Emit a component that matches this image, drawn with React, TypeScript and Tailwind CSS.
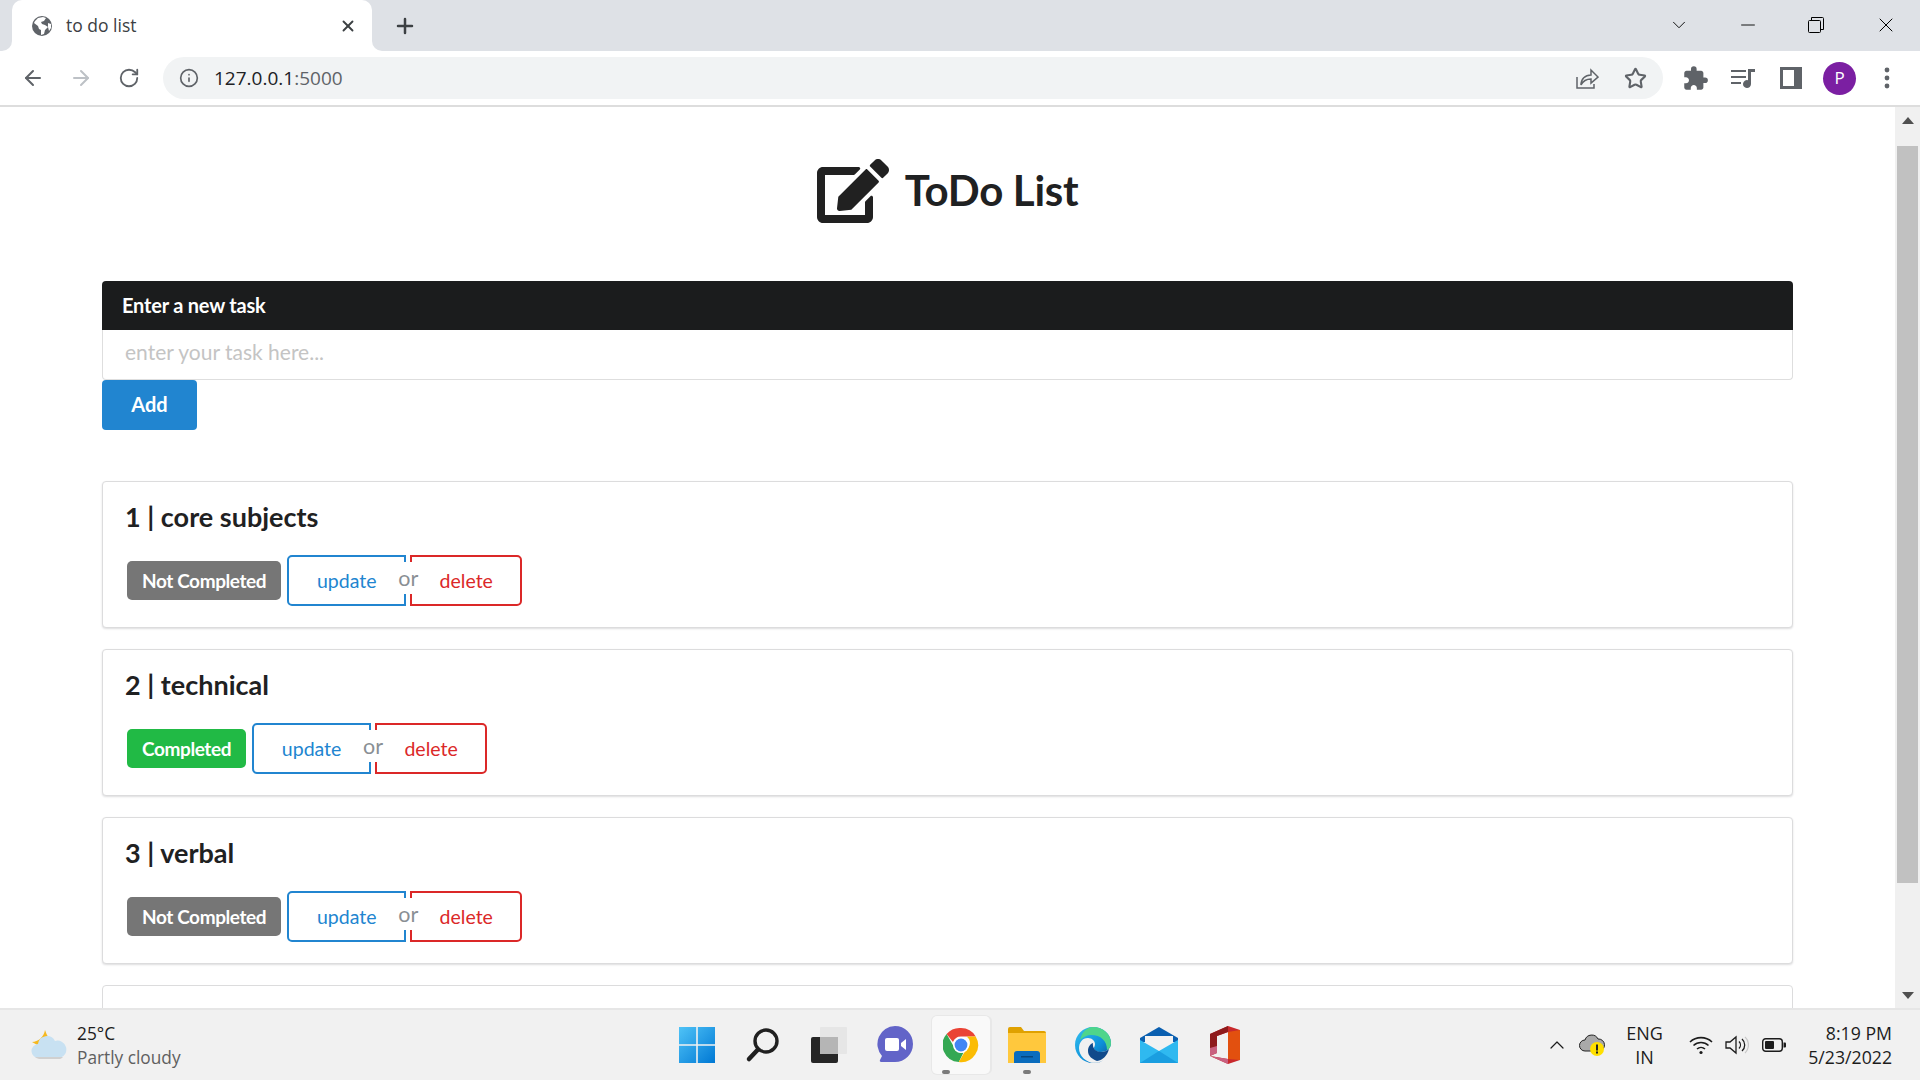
import { ArrowLeft, ArrowRight, ChevronDown, ChevronUp, Info, Minus, Plus, RotateCw, Star, X } from 'lucide-react'
import { FaEdit } from 'react-icons/fa'
import { MdExtension } from 'react-icons/md'

const TASKS = [
  { id: 1, name: 'core subjects', done: false },
  { id: 2, name: 'technical', done: true },
  { id: 3, name: 'verbal', done: false },
]

function Globe() {
  return (
    <svg width="22" height="22" viewBox="0 0 22 22">
      <circle cx="11" cy="11" r="10" fill="#5f6368" />
      <path d="M3 8l4 3 1 3 2 1v5l3-1 1-4 3-3-3-2-3-1-1-2 3-1 2-3-3-1-5 1-3 3z" fill="#fff" />
      <path d="M17 8l3 1 0 4-2 3-1-4z" fill="#fff" />
    </svg>
  )
}

function TabStrip() {
  return (
    <div className="flex h-[51px] items-end bg-[#dee1e6]">
      <div className="relative ml-[12px] flex h-[51px] w-[360px] items-center rounded-t-[10px] bg-white pl-[19px] pr-[15px]">
        <span className="absolute bottom-0 left-[-10px] h-[10px] w-[10px] bg-white">
          <span className="block h-full w-full rounded-br-[10px] bg-[#dee1e6]" />
        </span>
        <span className="absolute bottom-0 right-[-10px] h-[10px] w-[10px] bg-white">
          <span className="block h-full w-full rounded-bl-[10px] bg-[#dee1e6]" />
        </span>
        <Globe />
        <span className="ml-[13px] flex-1 text-[17.5px] text-[#3c4043]">to do list</span>
        <X size={18} strokeWidth={2.5} className="text-[#3c4043]" />
      </div>
      <Plus size={24} strokeWidth={2.5} className="mb-[13px] ml-[21px] text-[#3c4043]" />
      <div className="mb-[14px] ml-auto flex items-center text-black">
        <ChevronDown size={22} strokeWidth={1} className="mr-[47px]" />
        <Minus size={22} strokeWidth={1} className="mr-[49px]" />
        <svg width="16" height="16" viewBox="0 0 16 16" fill="none" stroke="#000" className="mr-[50px]">
          <rect x="0.5" y="3.5" width="12" height="12" rx="1" />
          <path d="M3.5 3V.5h11a1 1 0 0 1 1 1V12.5H13" />
        </svg>
        <X size={24} strokeWidth={1} className="mr-[22px]" />
      </div>
    </div>
  )
}

function ToolBar() {
  return (
    <div className="flex h-[56px] items-center border-b-2 border-[#dddddd] bg-white">
      <ArrowLeft size={24} strokeWidth={2} className="ml-[21px] text-[#5f6368]" />
      <ArrowRight size={24} strokeWidth={2} className="ml-[24px] text-[#bdc1c6]" />
      <RotateCw size={22} strokeWidth={2} className="ml-[25px] text-[#5f6368]" />
      <div className="ml-[23px] flex h-[42px] w-[1500px] items-center rounded-full bg-[#f1f3f4] pl-[16px] pr-[16px]">
        <Info size={20} strokeWidth={2} className="text-[#5f6368]" />
        <span className="ml-[15px] flex-1 text-[19px] text-[#202124]">
          127.0.0.1<span className="text-[#5f6368]">:5000</span>
        </span>
        <svg width="24" height="24" viewBox="0 0 24 24" fill="none" stroke="#5f6368" strokeWidth="1.5">
          <path d="M2 11v11h17v-4" />
          <path d="M6 19c0-6 4-10 10-10V4l7 7-7 6v-4c-5 0-8 2-10 6z" />
        </svg>
        <Star size={23} strokeWidth={2.2} className="ml-[25px] text-[#5f6368]" />
      </div>
      <MdExtension size={27} className="ml-[19px] text-[#5f6368]" />
      <svg width="24" height="22" viewBox="0 0 24 22" fill="#5f6368" className="ml-[22px]">
        <path d="M0 3h15v2H0zM0 9h15v2H0zM0 15h10v2H0z" />
        <path d="M17 2h7v3h-4v12a4 4 0 1 1-3-3.8z" />
      </svg>
      <svg width="22" height="22" viewBox="0 0 22 22" className="ml-[25px]">
        <path d="M0 0h22v22H0z" fill="#5f6368" />
        <path d="M3 3h11v16H3z" fill="#fff" />
      </svg>
      <div className="ml-[21px] flex h-[33px] w-[33px] items-center justify-center rounded-full bg-[#7b1fa2] text-[17px] text-white">
        P
      </div>
      <svg width="6" height="22" viewBox="0 0 6 22" fill="#5f6368" className="ml-[28px]">
        <circle cx="3" cy="3" r="2.4" />
        <circle cx="3" cy="11" r="2.4" />
        <circle cx="3" cy="19" r="2.4" />
      </svg>
    </div>
  )
}

function TaskCard({ id, name, done }: { id: number; name: string; done: boolean }) {
  return (
    <div className="h-[147px] rounded-[4px] border border-[#dcdcdd] bg-white pl-[24px] pt-[17px] shadow-[0_1px_2px_rgba(34,36,38,0.15)]">
      <div className="ml-[-2px] text-[27px] font-bold leading-[36px] text-[#1f2122]">
        {id} | {name}
      </div>
      <div className="mt-[20px] flex items-center">
        {done ? (
          <span className="flex h-[39px] items-center rounded-[5px] bg-[#21ba45] px-[15px] pt-[1px] text-[19px] font-bold tracking-[-0.4px] text-white">
            Completed
          </span>
        ) : (
          <span className="flex h-[39px] items-center rounded-[5px] bg-[#767676] px-[15px] pt-[1px] text-[19px] font-bold tracking-[-0.4px] text-white">
            Not Completed
          </span>
        )}
        <div className="relative ml-[6px] flex">
          <span className="flex h-[51px] w-[119px] items-center justify-center rounded-l-[5px] border-2 border-[#2185d0] bg-white text-[19.5px] text-[#2185d0]">
            update
          </span>
          <span className="ml-[4px] flex h-[51px] w-[112px] items-center justify-center rounded-r-[5px] border-2 border-[#db2828] bg-white text-[19.5px] text-[#db2828]">
            delete
          </span>
          <span className="absolute left-[110px] top-[7px] flex h-[32px] w-[22px] items-center justify-center bg-white text-[21.5px] text-[#8a8f94]">
            or
          </span>
        </div>
      </div>
    </div>
  )
}

function Page() {
  return (
    <div className="flex min-h-0 flex-1">
      <div className="min-w-0 flex-1 overflow-hidden bg-white px-[102px] font-['Lato',sans-serif]">
        <div className="flex h-[174px] items-start justify-center pt-[48px]">
          <FaEdit size={72} className="mr-[16px] text-[#212121]" />
          <span className="mt-[8px] text-[42px] font-bold leading-[54px] tracking-[-0.3px] text-[#1f2122]">
            ToDo List
          </span>
        </div>
        <div className="flex h-[49px] items-center rounded-t-[4px] bg-[#1b1c1d] pb-[2px] pl-[20px] text-[20px] font-bold tracking-[-0.2px] text-white">
          Enter a new task
        </div>
        <div className="flex h-[50px] items-center rounded-b-[4px] border border-t-0 border-[#dedede] bg-white pb-[5px] pl-[22px] text-[21px] text-[#c4c4c4]">
          enter your task here...
        </div>
        <button className="flex h-[50px] w-[95px] items-center justify-center rounded-[4px] bg-[#2185d0] pb-[2px] text-[20px] font-bold text-white">
          Add
        </button>
        <div className="mt-[51px] flex flex-col gap-[21px]">
          {TASKS.map((t) => (
            <TaskCard key={t.id} {...t} />
          ))}
          <div className="h-[147px] rounded-[4px] border border-[#dcdcdd] bg-white" />
        </div>
      </div>
      <div className="flex w-[25px] shrink-0 flex-col items-center justify-between bg-[#f0f0f0]">
        <div className="flex w-full flex-col items-center">
          <svg width="12" height="7" viewBox="0 0 12 7" fill="#505050" className="mt-[10px]">
            <path d="M6 0l6 7H0z" />
          </svg>
          <div className="mt-[22px] h-[737px] w-[21px] bg-[#c1c1c1]" />
        </div>
        <svg width="12" height="7" viewBox="0 0 12 7" fill="#505050" className="mb-[9px]">
          <path d="M6 7L0 0h12z" />
        </svg>
      </div>
    </div>
  )
}

function ChromeLogo() {
  return (
    <svg width="36" height="36" viewBox="0 0 36 36">
      <path d="M18 1a17 17 0 0 1 14.7 8.5H18a8.5 8.5 0 0 0-8 5.6L3.6 7A17 17 0 0 1 18 1z" fill="#ea4335" />
      <path d="M3.6 7l7.4 13a8 8 0 0 0 9.5 5.6L15.8 35A17 17 0 0 1 3.6 7z" fill="#34a853" />
      <path d="M32.7 9.5A17 17 0 0 1 15.8 35l6.9-12a8 8 0 0 0 1-13.5z" fill="#fbbc04" />
      <circle cx="18" cy="18" r="8" fill="#fff" />
      <circle cx="18" cy="18" r="6.4" fill="#4285f4" />
    </svg>
  )
}

function TaskIcons() {
  return (
    <div className="ml-[1px] grid w-[594px] shrink-0 grid-cols-9 items-center justify-items-center">
      <svg width="36" height="36" viewBox="0 0 36 36">
        <defs>
          <linearGradient id="win" x1="0" y1="0" x2="1" y2="1">
            <stop offset="0" stopColor="#4fc3f7" />
            <stop offset="1" stopColor="#0078d4" />
          </linearGradient>
        </defs>
        <path d="M0 0h17.2v17.2H0zM18.8 0H36v17.2H18.8zM0 18.800h17.2V36H0zM18.800 18.800H36V36H18.800z" fill="url(#win)" />
      </svg>
      <svg width="36" height="36" viewBox="0 0 36 36" fill="none" stroke="#202020">
        <circle cx="21" cy="14" r="11" strokeWidth="3.4" />
        <path d="M12.500 23L4 32" strokeWidth="4.500" strokeLinecap="round" />
      </svg>
      <svg width="36" height="36" viewBox="0 0 36 36">
        <rect x="0" y="10" width="27" height="26" rx="2" fill="#262626" />
        <rect x="9" y="0" width="27" height="27" rx="1" fill="#e4e4e4" fillOpacity="0.8" />
        <rect x="9" y="10" width="18" height="17" fill="#b5b5b5" />
      </svg>
      <svg width="36" height="38" viewBox="0 0 36 38">
        <path d="M18 0a18 18 0 0 1 0 36H4c-1 0-1.500-1-1-2l2-4A18 18 0 0 1 18 0z" fill="#6264c8" />
        <rect x="8" y="12" width="14" height="13" rx="2" fill="#fff" />
        <path d="M24 17l5-4v11l-5-4z" fill="#fff" />
      </svg>
      <div className="relative flex h-[58px] w-[58px] items-center justify-center rounded-[5px] bg-[#f9f9f9] shadow-[2px_0_0_#e8e8e8,0_0_0_1px_#e8e8e8]">
        <ChromeLogo />
        <span className="absolute bottom-0 left-[10px] h-[4px] w-[8px] rounded-full bg-[#7a7a7a]" />
      </div>
      <div className="relative flex h-[58px] w-[58px] items-center justify-center">
        <svg width="38" height="36" viewBox="0 0 38 36">
          <path d="M0 2a2 2 0 0 1 2-2h11l3 4h20a2 2 0 0 1 2 2v4H0z" fill="#e0a100" />
          <path d="M0 6h38v30H0z" fill="#ffc83d" />
          <path d="M6 36V27a3 3 0 0 1 3-3h20a3 3 0 0 1 3 3v9z" fill="#0a6cbd" />
          <path d="M13 29h12v1.500H13z" fill="#06477f" />
        </svg>
        <span className="absolute bottom-0 left-[25px] h-[4px] w-[8px] rounded-full bg-[#7a7a7a]" />
      </div>
      <svg width="36" height="36" viewBox="0 0 36 36">
        <defs>
          <linearGradient id="edge" x1="0" y1="0" x2="1" y2="1">
            <stop offset="0" stopColor="#35c1f1" />
            <stop offset="0.6" stopColor="#0c8fd8" />
            <stop offset="1" stopColor="#114a8b" />
          </linearGradient>
        </defs>
        <path d="M18 0c10 0 18 7 18 16 0 6-5 9-10 9-4 0-7-2-7-4 0-1 1-2 1-4 0-3-3-6-7-6-6 0-9 5-9 10 0 8 7 15 16 15 3 0 6-1 9-3-3 2-7 3-11 3C8 36 0 28 0 18S8 0 18 0z" fill="url(#edge)" />
        <path d="M18 0c10 0 18 7 18 16 0 4-2 6-4 7 0-9-6-15-16-15-4 0-8 2-11 5C7 5 12 0 18 0z" fill="#4ed58b" />
        <path d="M13 24c0-4 2-7 5-8-1 5 3 9 8 9 3 0 6-1 8-3-2 7-6 11-12 12-5-2-9-5-9-10z" fill="#114a8b" />
      </svg>
      <svg width="38" height="36" viewBox="0 0 38 36">
        <path d="M0 11L19 0l19 11v4H0z" fill="#0a5fb0" />
        <path d="M5 9h28v12L19 28 5 21z" fill="#f2f2f2" />
        <path d="M0 13l19 11 19-11v23H0z" fill="#2fb9f0" />
        <path d="M0 36l19-12 19 12z" fill="#1a9ee0" />
      </svg>
      <svg width="30" height="38" viewBox="0 0 30 38">
        <path d="M0 8L18 0l12 4v30l-12 4L0 30l18 3V6L7 10v17l-7 3z" fill="#c8282c" />
        <path d="M0 8L18 0v6L7 10v10L0 24z" fill="#8e1a1c" />
        <path d="M0 22l7-2v7l-7 3zM0 30l18 3v5z" fill="#c9607f" />
        <path d="M18 6v27l12 1V4z" fill="#e2500f" />
      </svg>
    </div>
  )
}

function Tray() {
  return (
    <div className="flex flex-1 items-center text-[#1c1c1c]">
      <ChevronUp size={24} strokeWidth={1.2} className="ml-[287px]" />
      <svg width="26" height="24" viewBox="0 0 26 24" className="ml-[10px]">
        <path d="M6 18a5.500 5.500 0 0 1 0-11 7 7 0 0 1 13-1 6 6 0 0 1 1 12z" fill="#a9a9a9" stroke="#222" strokeWidth="1" />
        <circle cx="18" cy="16" r="7" fill="#ffe000" />
        <path d="M17 11.500h2v6h-2zM17 18.500h2v2h-2z" fill="#222" />
      </svg>
      <div className="ml-[21px] w-[37px] text-center text-[18px] leading-[24px]">
        ENG
        <br />
        IN
      </div>
      <svg width="24" height="20" viewBox="0 0 24 20" fill="none" stroke="#1c1c1c" strokeWidth="1.6" className="ml-[26px]">
        <path d="M1 7a16 16 0 0 1 22 0M4.500 10.500a11 11 0 0 1 15 0M8 14a6 6 0 0 1 8 0" />
        <circle cx="12" cy="17.500" r="1.600" fill="#1c1c1c" stroke="none" />
      </svg>
      <svg width="24" height="20" viewBox="0 0 24 20" fill="none" stroke="#1c1c1c" strokeWidth="1.3" className="ml-[12px]">
        <path d="M1 7h4l6-5v16l-6-5H1z" />
        <path d="M14 6.500a5 5 0 0 1 0 7M17 4a8 8 0 0 1 0 12" />
        <path d="M20 2a11 11 0 0 1 0 16" stroke="#c8c8c8" />
      </svg>
      <svg width="24" height="14" viewBox="0 0 24 14" fill="none" className="ml-[13px]">
        <rect x="0.700" y="0.700" width="19.600" height="12.600" rx="3" stroke="#1c1c1c" strokeWidth="1.400" />
        <rect x="3" y="3" width="9" height="8" rx="1" fill="#1c1c1c" />
        <path d="M21.500 4.500H23a1 1 0 0 1 1 1v3a1 1 0 0 1-1 1h-1.500z" fill="#1c1c1c" />
      </svg>
      <div className="ml-auto mr-[28px] text-right text-[17.700px] leading-[24px]">
        8:19 PM
        <br />
        5/23/2022
      </div>
    </div>
  )
}

function TaskBar() {
  return (
    <div className="flex h-[72px] shrink-0 items-center border-t-2 border-[#e6e6e6] bg-[#f1f1f1]">
      <div className="flex w-[663px] shrink-0 items-center pl-[31px]">
        <svg width="36" height="30" viewBox="0 0 36 30">
          <path d="M14 0c2 6 4 9 8 11-3 4-8 6-12 5-3-1-6-2-9-4 6 0 12-5 13-12z" fill="#f5b81f" />
          <path d="M8 28a7 7 0 0 1-1-14 9 9 0 0 1 17-3 8 8 0 0 1 5 17z" fill="#c8e1f2" />
          <path d="M4 27a7 7 0 0 0 4 2h21a8 8 0 0 0 3-2z" fill="#d0d0d0" />
        </svg>
        <div className="ml-[10px] pt-[1px] text-[17.300px] leading-[24px]">
          <div className="text-[#1c1c1c]">25°C</div>
          <div className="text-[#5f5f5f]">Partly cloudy</div>
        </div>
      </div>
      <TaskIcons />
      <Tray />
    </div>
  )
}

export default function App() {
  return (
    <div className="flex h-screen flex-col overflow-hidden font-['Open_Sans',sans-serif]">
      <TabStrip />
      <ToolBar />
      <Page />
      <TaskBar />
    </div>
  )
}
